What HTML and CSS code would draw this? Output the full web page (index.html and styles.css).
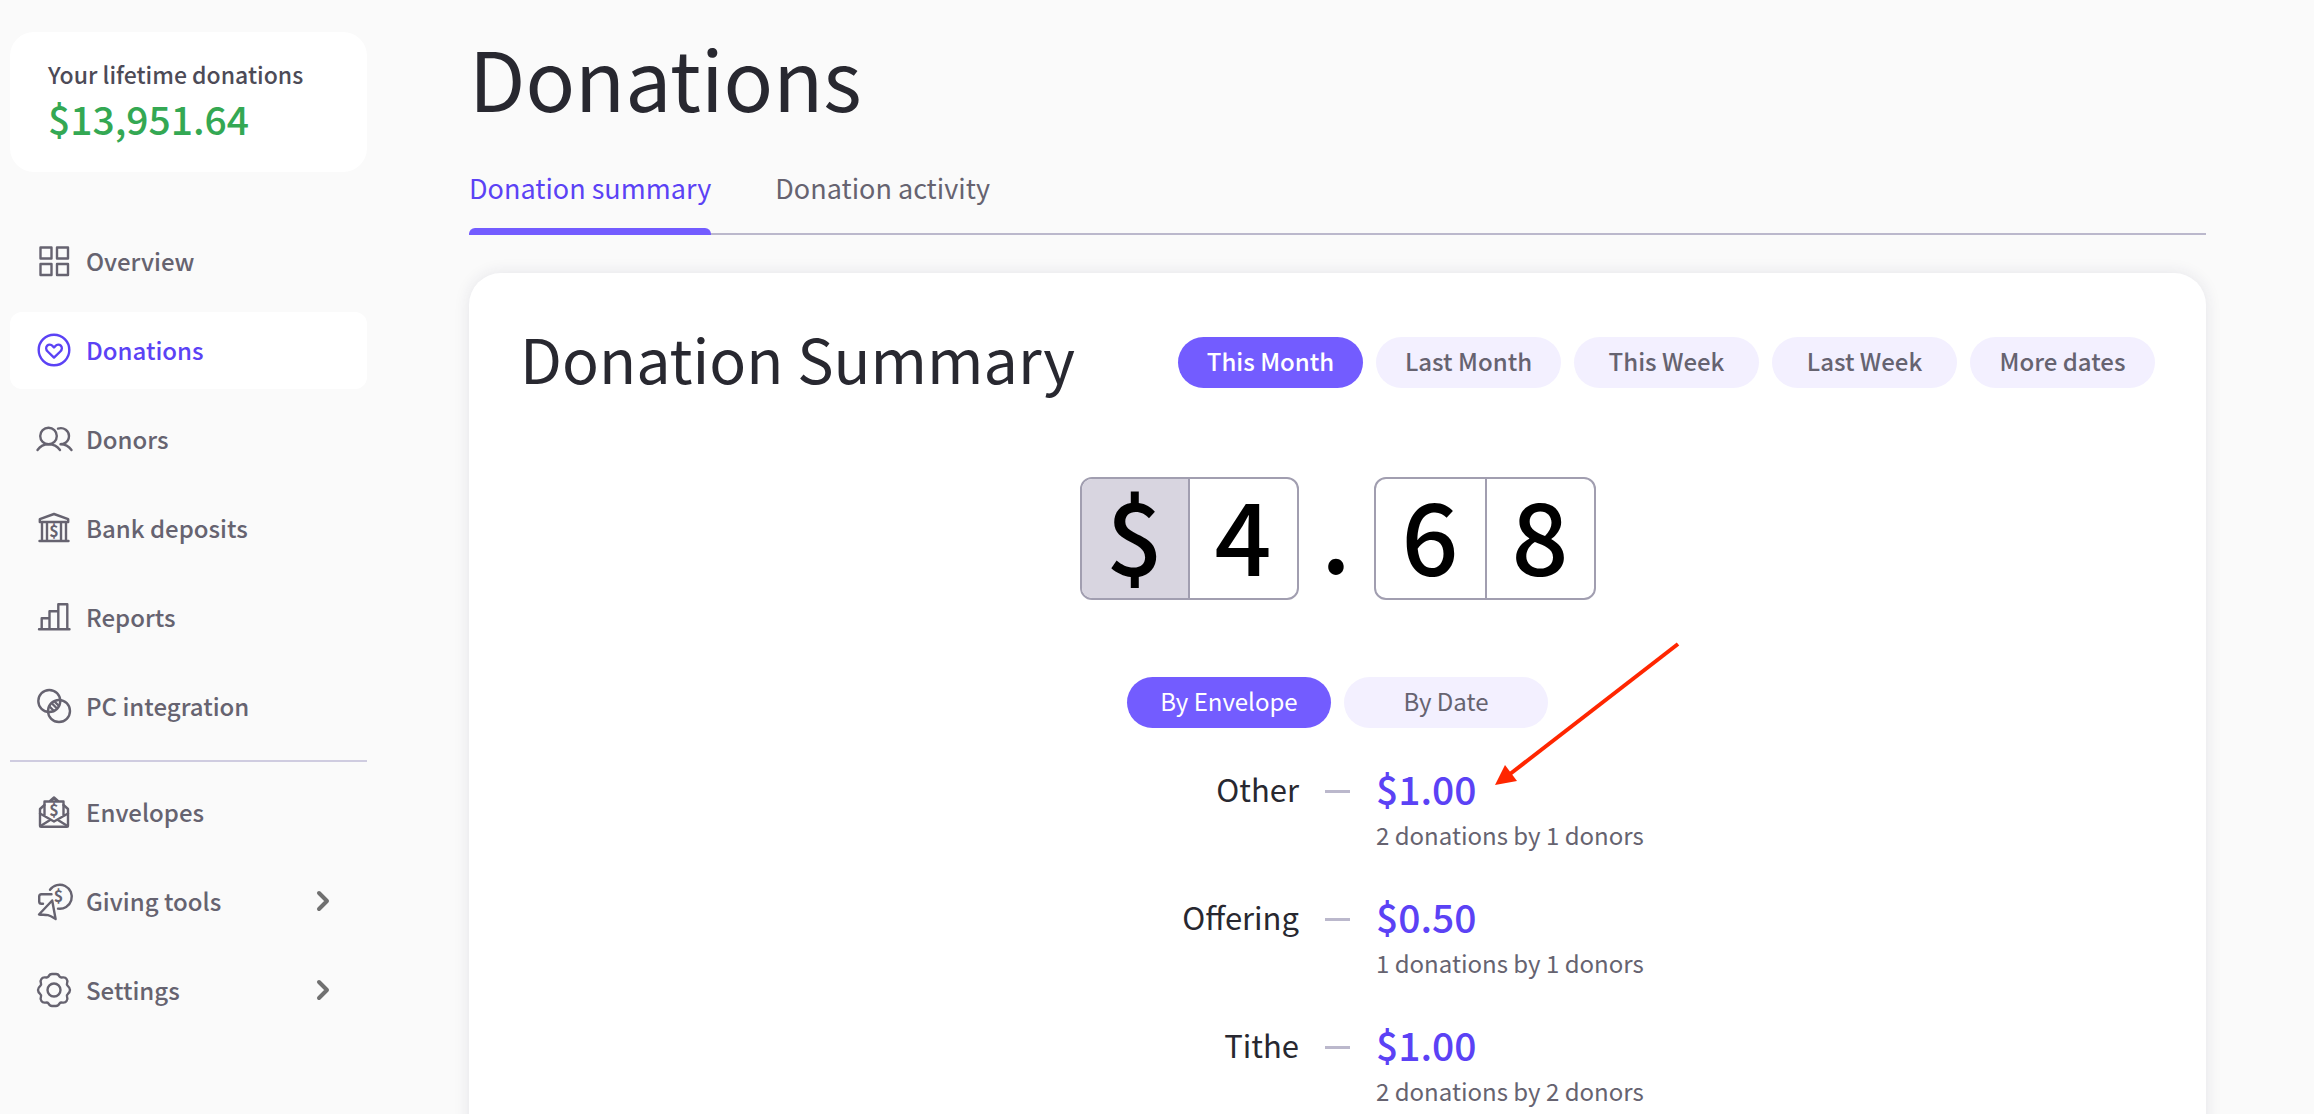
FILE: index.html
```html
<!DOCTYPE html>
<html lang="en">
<head>
    <meta charset="UTF-8">
    <title>Donations</title>
    <link rel="stylesheet" href="styles.css">
</head>
<body>
    <div class="layout">
        <aside class="sidebar">
            <div class="lifetime">
                <div class="lifetime-label">Your lifetime donations</div>
                <div class="lifetime-total">$13,951.64</div>
            </div>

            <nav class="nav">
                <a class="nav-item" href="#">
                    <svg class="icon" viewBox="0 0 36 36">
                        <rect x="4.5" y="4.5" width="11" height="11"/><rect x="21" y="4.5" width="11" height="11"/>
                        <rect x="4.5" y="21" width="11" height="11"/><rect x="21" y="21" width="11" height="11"/>
                    </svg>
                    Overview
                </a>
                <a class="nav-item active" href="#">
                    <svg class="icon" viewBox="0 0 36 36">
                        <circle cx="18" cy="18" r="15.3"/>
                        <path d="M18 25.6l-6.3-6.1c-2-2-1.9-4.4-.5-5.8 1.5-1.5 3.9-1.3 5.2.1L18 15.4l1.6-1.6c1.3-1.4 3.7-1.6 5.2-.1 1.4 1.4 1.5 3.8-.5 5.8z"/>
                    </svg>
                    Donations
                </a>
                <a class="nav-item" href="#">
                    <svg class="icon" viewBox="0 0 36 36">
                        <circle cx="12.5" cy="15" r="8.3"/>
                        <path d="M1.5 29C4 25.500 8 23.300 12.500 23.300S21.500 25.500 24 29"/>
                        <path d="M22 7.600c6-1.800 11 2.300 11 7.400 0 3.600-2.300 6.500-5.500 7.700l-3 .5c4.800 0 8.500 2.300 11 5.800"/>
                    </svg>
                    Donors
                </a>
                <a class="nav-item" href="#">
                    <svg class="icon" viewBox="0 0 36 36">
                        <path d="M18 4L3.800 9.200V12h28.400V9.200zM3.500 31h29M6 12v19M11 12v19M25 12v19M30 12v19"/>
                        <text class="icon-sign" x="18" y="27">$</text>
                    </svg>
                    Bank deposits
                </a>
                <a class="nav-item" href="#">
                    <svg class="icon" viewBox="0 0 36 36">
                        <path d="M3 30.300h30.500M5.700 30V19.300h7.800M13.500 30V12.300h8.600M22.300 30V5.300h9V30"/>
                    </svg>
                    Reports
                </a>
                <a class="nav-item" href="#">
                    <svg class="icon" viewBox="0 0 36 36">
                        <circle cx="13.3" cy="13" r="11"/><circle cx="23" cy="23" r="11"/>
                        <path d="M13.500 18.500l4.500 4.500M16 15.500l4.500 4.500M18.500 13.500l4 4"/>
                    </svg>
                    PC integration
                </a>
            </nav>

            <hr class="divider">

            <nav class="nav">
                <a class="nav-item" href="#">
                    <svg class="icon" viewBox="0 0 36 36">
                        <path d="M8.500 11L4 15v16.500c0 .8.500 1.300 1.300 1.300h25.400c.8 0 1.300-.5 1.300-1.300V15l-4.500-4"/>
                        <path d="M8.500 22V7.500h19V22M13.500 7.500L18 3.500l4.500 4M4 19.500l14 8 14-8M4.500 32l10-6.300M31.500 32l-10-6.300"/>
                        <text class="icon-sign" x="18" y="22">$</text>
                    </svg>
                    Envelopes
                </a>
                <a class="nav-item" href="#">
                    <svg class="icon" viewBox="0 0 36 36">
                        <path d="M14 6.800A12 12 0 1 1 22 25.600M15.500 11.200H5.500c-1.300 0-2.300 1-2.300 2.300v5c0 1.300 1 2.300 2.300 2.300H7"/>
                        <path d="M16.200 17.500L3 31.500c3.200.3 6.500.2 9 .6 2.700.7 5.200 2.400 7.600 3.900z"/>
                        <text class="icon-sign" x="22.5" y="19">$</text>
                    </svg>
                    Giving tools
                    <svg class="chevron" viewBox="0 0 12 20"><path d="M2 2l8 8-8 8"/></svg>
                </a>
                <a class="nav-item" href="#">
                    <svg class="icon" viewBox="0 0 36 36">
                        <circle cx="18" cy="18" r="6.5"/>
                        <path d="M12.500 4.600q1-2.600 3.500-2.600h4q2.500 0 3.500 2.600q1 1.300 3 .8q2.800-.4 4 1.500q1.500 2 .6 4q-.7 2 .6 3q2.300 2 2.300 4.100t-2.300 4.100q-1.300 1-.6 3q.9 2-.6 4q-1.200 1.900-4 1.500q-2-.5-3 .8q-1 2.600-3.500 2.600h-4q-2.500 0-3.500-2.600q-1-1.300-3-.8q-2.800.4-4-1.500q-1.500-2-.6-4q.7-2-.6-3q-2.300-2-2.300-4.100t2.300-4.100q1.300-1 .6-3q-.9-2 .6-4q1.200-1.900 4-1.500q2 .5 3-.8z"/>
                    </svg>
                    Settings
                    <svg class="chevron" viewBox="0 0 12 20"><path d="M2 2l8 8-8 8"/></svg>
                </a>
            </nav>
        </aside>

        <main class="main">
            <h1>Donations</h1>
            <div class="tabs">
                <a class="tab active" href="#">Donation summary</a>
                <a class="tab" href="#">Donation activity</a>
            </div>

            <section class="card">
                <div class="card-header">
                    <h2>Donation Summary</h2>
                    <div class="pills">
                        <button class="pill active">This Month</button>
                        <button class="pill">Last Month</button>
                        <button class="pill">This Week</button>
                        <button class="pill">Last Week</button>
                        <button class="pill">More dates</button>
                    </div>
                </div>

                <div class="counter">
                    <div class="digits">
                        <span class="digit currency">$</span>
                        <span class="digit">4</span>
                    </div>
                    <span class="point">.</span>
                    <div class="digits">
                        <span class="digit">6</span>
                        <span class="digit">8</span>
                    </div>
                </div>

                <div class="pills group-by">
                    <button class="pill active">By Envelope</button>
                    <button class="pill">By Date</button>
                </div>

                <ul class="breakdown">
                    <li class="row">
                        <span class="name">Other</span>
                        <span class="dash"></span>
                        <span class="amount">$1.00</span>
                        <span class="detail">2 donations by 1 donors</span>
                        <svg class="arrow" viewBox="0 0 188 148">
                            <path class="arrow-line" d="M184 4L16 134"/>
                            <path class="arrow-head" d="M1 145L11 125L23 141z"/>
                        </svg>
                    </li>
                    <li class="row">
                        <span class="name">Offering</span>
                        <span class="dash"></span>
                        <span class="amount">$0.50</span>
                        <span class="detail">1 donations by 1 donors</span>
                    </li>
                    <li class="row">
                        <span class="name">Tithe</span>
                        <span class="dash"></span>
                        <span class="amount">$1.00</span>
                        <span class="detail">2 donations by 2 donors</span>
                    </li>
                </ul>
            </section>
        </main>
    </div>
</body>
</html>
```
FILE: styles.css
```css
* { box-sizing: border-box; }
body { margin: 0; background: #fafafa; color: #282830; font-family: "Noto Sans CJK JP", "Noto Sans", sans-serif; font-size: 24px; line-height: 32px; }
a { color: inherit; text-decoration: none; }
h1, h2 { margin: 0; font-weight: 400; }
button { font: inherit; border: 0; cursor: pointer; }

.layout { display: flex; height: 100vh; overflow: hidden; }

/* Sidebar */
.sidebar { flex: none; width: 357px; margin-left: 10px; padding-top: 32px; }
.lifetime { padding: 26px 38px; height: 140px; background: #fff; border-radius: 24px; margin-bottom: 51px; }
.lifetime-label { color: #4d4b57; font-size: 23px; font-weight: 500; }
.lifetime-total { color: #34a853; font-size: 39px; line-height: 56px; font-weight: 500; }
.nav { display: flex; flex-direction: column; gap: 12px; }
.nav-item { display: flex; align-items: center; gap: 14px; height: 77px; padding: 0 38px 2px 26px; border-radius: 12px; color: #666370; font-weight: 500; }
.nav-item.active { background: #fff; color: #5b42f5; }
.icon { width: 36px; height: 36px; overflow: visible; fill: none; stroke: currentColor; stroke-width: 2.4; stroke-linecap: round; stroke-linejoin: round; }
.icon-sign { fill: currentColor; stroke: none; font-size: 16px; font-weight: 700; text-anchor: middle; }
.chevron { width: 12px; height: 20px; margin-left: auto; overflow: visible; fill: none; stroke: #707070; stroke-width: 4; stroke-linecap: round; stroke-linejoin: round; }
.divider { height: 2px; margin: 15px 0 12px; border: 0; background: #cfcce0; }

/* Main column */
.main { flex: 1; display: flex; flex-direction: column; margin: 0 108px 0 102px; padding-top: 32px; }
h1 { font-size: 82px; line-height: 90px; }
.tabs { display: flex; gap: 64px; margin-top: 44px; border-bottom: 2px solid #bbb8cc; }
.tab { position: relative; height: 67px; padding-top: 6px; font-size: 27px; color: #666370; }
.tab.active { color: #5b42f5; }
.tab.active::after { content: ""; position: absolute; left: 0; right: 0; bottom: -2px; height: 7px; border-radius: 6px 6px 0 0; background: #735cff; }

.card { flex: 1; margin-top: 38px; padding: 52px 51px; background: #fff; border-radius: 32px 32px 0 0; box-shadow: 0 0 16px rgba(40, 40, 80, 0.1); }
.card-header { display: flex; align-items: center; justify-content: space-between; height: 74px; }
h2 { padding-bottom: 8px; font-size: 61px; line-height: 72px; }
.pills { display: flex; gap: 13px; }
.pill { width: 185px; height: 51px; padding: 0 0 2px; border-radius: 26px; background: #f3f0ff; color: #666370; font-weight: 500; }
.pill.active { background: #735cff; color: #fff; }

/* Counter with the total */
.counter { display: flex; justify-content: center; margin-top: 78px; color: #000; font-size: 100px; line-height: 107px; font-weight: 500; }
.digits { display: flex; height: 123px; border: 2px solid #a19eb0; border-radius: 12px; }
.digit { width: 109px; text-align: center; }
.digit + .digit { border-left: 2px solid #a19eb0; }
.currency { width: 106px; border-radius: 10px 0 0 10px; background: #d8d5e0; }
.point { width: 75px; text-align: center; }

.group-by { justify-content: center; margin-top: 77px; }
.group-by .pill { width: 204px; padding-bottom: 4px; font-weight: 400; }

.breakdown { list-style: none; margin: 36px 0 0; padding: 0; }
.row { position: relative; display: grid; grid-template-columns: 1fr 25px 1fr; column-gap: 26px; align-items: center; height: 128px; align-content: start; }
.name { padding-bottom: 6px; text-align: right; font-size: 31px; }
.dash { height: 3px; background: #bbb8cc; }
.amount { padding-bottom: 6px; font-size: 39px; line-height: 49px; font-weight: 500; color: #5b42f5; }
.detail { grid-column: 3; color: #666370; }

/* Callout pointing at the first amount */
.arrow { position: absolute; left: calc(50% + 156px); bottom: 104px; width: 188px; height: 148px; }
.arrow-line { stroke: #ff2600; stroke-width: 4; }
.arrow-head { fill: #ff2600; }
```
